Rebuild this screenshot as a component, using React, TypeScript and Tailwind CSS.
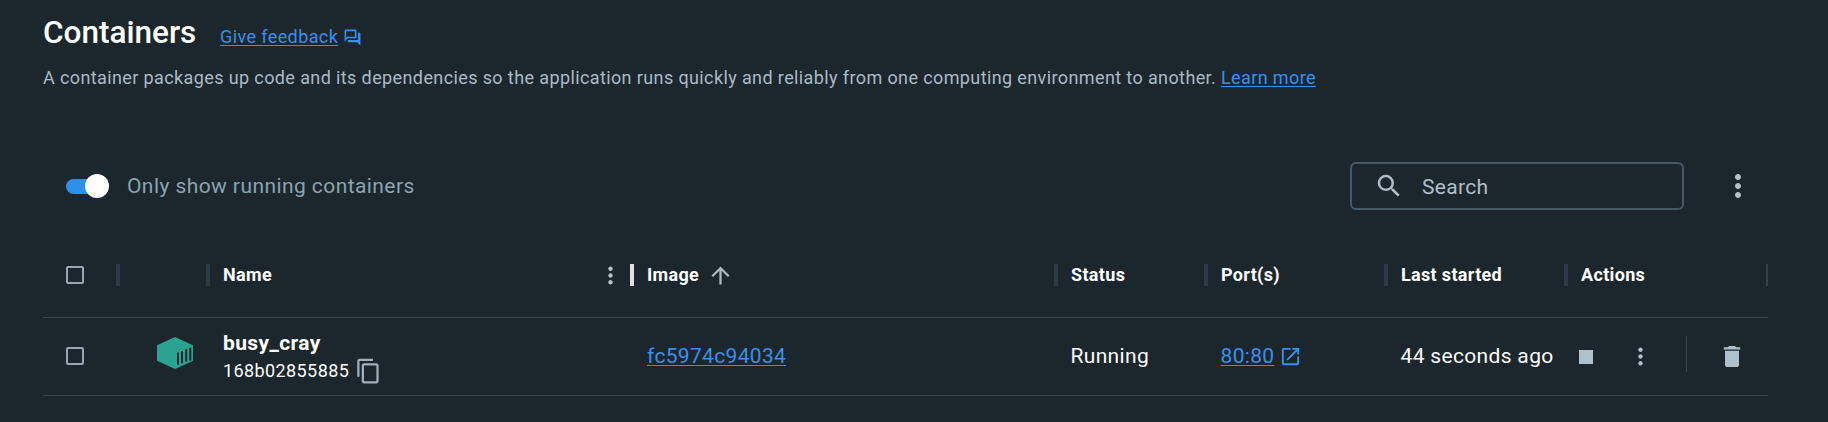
import type { ReactNode } from "react";
import {
  MdArrowUpward,
  MdContentCopy,
  MdDelete,
  MdMoreVert,
  MdOpenInNew,
  MdOutlineQuestionAnswer,
  MdSearch,
  MdStop,
} from "react-icons/md";

const COLUMNS = "grid grid-cols-[75px_90px_424px_424px_150px_180px_180px_202px]";

function Checkbox() {
  return <span role="checkbox" aria-checked="false" className="block size-[18px] rounded-[2px] border-2 border-[#95a8b4]" />;
}

function HeaderCell({ children, active = false, last = false }: { children?: ReactNode; active?: boolean; last?: boolean }) {
  return (
    <div className="relative flex h-full items-center pb-[2px] pl-[15px] text-[18px] font-bold tracking-[0.33px] text-white">
      {children}
      <span
        className={
          last
            ? "absolute right-0 top-[31px] h-[22px] w-[2px] bg-[#33414b]"
            : active
              ? "absolute -right-[2px] top-[31px] h-[22px] w-[4px] bg-[#dfe3e6]"
              : "absolute -right-[2px] top-[31px] h-[22px] w-[4px] bg-[#2e3b46]"
        }
      />
    </div>
  );
}

function ContainerIcon() {
  return (
    <svg viewBox="0 0 36 32" className="h-8 w-9">
      <path d="M18 0 36 8.3v15.4L18 32 0 23.7V8.3z" fill="#2aa391" />
      <path d="M21 15.5v12.2M25 14v12.2M29.2 12.3v12.2M33.3 10.7v12.7" stroke="#1c272d" strokeWidth="2" />
    </svg>
  );
}

function Header() {
  return (
    <header className="pl-[43px] pt-[14px]">
      <div className="flex items-baseline">
        <h1 className="w-[177px] translate-y-px text-[31.5px] font-medium leading-[36px] text-white">Containers</h1>
        <a className="translate-y-px text-[18px] leading-[24px] tracking-[0.4px] text-[#3790ee] underline decoration-1 underline-offset-2">Give feedback</a>
        <MdOutlineQuestionAnswer className="ml-[5px] size-[19px] translate-y-[5px] self-center text-[#3790ee]" />
      </div>
      <p className="mt-[15px] text-[18px] leading-[26px] tracking-[0.387px] text-[#aabac6]">
        A container packages up code and its dependencies so the application runs quickly and reliably from one computing environment to another.{" "}
        <a className="text-[#3790ee] underline decoration-1 underline-offset-2">Learn more</a>
      </p>
    </header>
  );
}

function Toolbar() {
  return (
    <div className="mt-[71px] flex h-12 items-center pl-[66px]">
      <div className="flex h-[15px] w-[43px] items-center justify-end rounded-full bg-linear-to-r from-[#2e8fee] from-80% to-transparent to-80%">
        <span className="size-6 shrink-0 rounded-full bg-white" />
      </div>
      <span className="ml-[18px] pt-[2px] text-[21px] tracking-[0.42px] text-[#8ba3b0]">Only show running containers</span>
      <div className="ml-auto flex h-12 w-[334px] items-center rounded-md border-2 border-[#465966] pl-[22px] text-[#b0bec8]">
        <MdSearch className="size-[30px]" />
        <span className="ml-[18px] pt-[3px] text-[21px] tracking-[0.3px]">Search</span>
      </div>
      <MdMoreVert className="ml-9 mr-[72px] size-9 text-[#b4c2cc]" />
    </div>
  );
}

function Table() {
  return (
    <div className="ml-[43px] mt-[23px] w-[1725px]">
      <div className={`${COLUMNS} h-[85px] border-b border-[#37444c]`}>
        <div className="relative flex items-center pl-[23px]">
          <Checkbox />
          <span className="absolute -right-[2px] top-[31px] h-[22px] w-[4px] bg-[#2e3b46]" />
        </div>
        <HeaderCell />
        <HeaderCell active>
          Name
          <MdMoreVert className="ml-auto mr-2 size-[27px] translate-y-px text-[#b4c2cc]" />
        </HeaderCell>
        <HeaderCell>
          Image
          <MdArrowUpward className="ml-2 size-[27px] translate-y-px text-[#aebac2]" />
        </HeaderCell>
        <HeaderCell>Status</HeaderCell>
        <HeaderCell>Port(s)</HeaderCell>
        <HeaderCell>Last started</HeaderCell>
        <HeaderCell last>Actions</HeaderCell>
      </div>
      <div className={`${COLUMNS} h-[78px] items-center border-b border-[#37444c] text-[21px] tracking-[0.33px] text-white`}>
        <div className="pb-[2px] pl-[23px]">
          <Checkbox />
        </div>
        <div className="-mt-[7px] pl-[39px]">
          <ContainerIcon />
        </div>
        <div className="pl-[15px]">
          <div className="font-bold leading-[28px] tracking-[0.4px]">busy_cray</div>
          <div className="flex items-center text-[18px] leading-[27px] tracking-[0.4px]">
            168b02855885
            <MdContentCopy className="ml-[5.5px] size-[27px] translate-y-[0.5px] text-[#a0b1bc]" />
          </div>
        </div>
        <div className="pl-[15px]">
          <a className="text-[#3790ee] underline decoration-1 underline-offset-2">fc5974c94034</a>
        </div>
        <div className="pl-[14.5px]">Running</div>
        <div className="flex items-center pl-[14.5px] text-[#3790ee]">
          <a className="underline decoration-1 underline-offset-2">80:80</a>
          <MdOpenInNew className="ml-[5px] size-[23px]" />
        </div>
        <div className="whitespace-nowrap pl-[14.5px]">44 seconds ago</div>
        <div className="flex items-center text-[#afc1cd]">
          <MdStop className="ml-[6px] size-7" />
          <MdMoreVert className="ml-[27px] size-[27px]" />
          <span className="ml-8 h-9 w-px -translate-y-[3px] bg-[#37444c]" />
          <MdDelete className="ml-[31px] size-7 -translate-y-[0.5px]" />
        </div>
      </div>
    </div>
  );
}

export default function App() {
  return (
    <main className="h-[422px] w-[1828px] overflow-hidden bg-[#1c272d] font-[Roboto,sans-serif]">
      <Header />
      <Toolbar />
      <Table />
    </main>
  );
}
